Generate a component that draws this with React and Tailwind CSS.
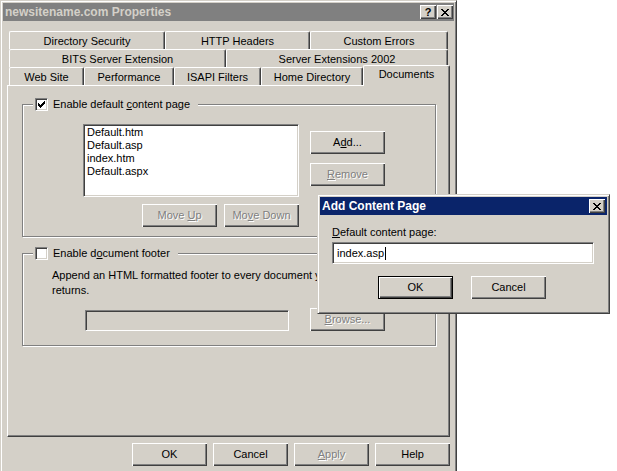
import React from 'react';

const raised =
  'bg-[#d4d0c8] shadow-[inset_1px_1px_#fff,inset_-1px_-1px_#404040,inset_-2px_-2px_#808080]';
const sunken =
  'border border-t-[#808080] border-l-[#808080] border-r-white border-b-white shadow-[inset_1px_1px_#404040,inset_-1px_-1px_#d4d0c8]';

function Button({ children, disabled, primary, className = '' }) {
  return (
    <div
      className={`flex h-[23px] w-[75px] items-center justify-center text-[11px] ${
        primary ? 'border border-black ' + raised : raised
      } ${disabled ? 'text-[#808080] [text-shadow:1px_1px_0_#fff]' : 'text-black'} ${className}`}
    >
      <span className="whitespace-pre">{children}</span>
    </div>
  );
}

const U = ({ children }) => <span className="underline underline-offset-[1px]">{children}</span>;

function Checkbox({ checked }) {
  return (
    <div className={`h-[13px] w-[13px] shrink-0 bg-white ${sunken}`}>
      {checked && (
        <svg width="11" height="11" viewBox="0 0 11 11" shapeRendering="crispEdges">
          <path
            fill="#000"
            d="M8 2h1v1H8z M7 3h2v1H7z M2 4h1v1H2z M6 4h3v1H6z M2 5h2v1H2z M5 5h3v1H5z M2 6h5v1H2z M3 7h3v1H3z M4 8h1v1H4z"
          />
        </svg>
      )}
    </div>
  );
}

function CloseGlyph() {
  return (
    <svg width="8" height="7" viewBox="0 0 8 7" shapeRendering="crispEdges">
      <path
        fill="#000"
        d="M0 0h2v1H0z M6 0h2v1H6z M1 1h2v1H1z M5 1h2v1H5z M2 2h4v1H2z M3 3h2v1H3z M2 4h4v1H2z M1 5h2v1H1z M5 5h2v1H5z M0 6h2v1H0z M6 6h2v1H6z"
      />
    </svg>
  );
}

function CaptionButton({ children }) {
  return <div className={`flex h-[14px] w-[16px] items-center justify-center ${raised}`}>{children}</div>;
}

function Tab({ className = '', children }) {
  return (
    <div
      className={`flex h-[18px] shrink-0 items-center justify-center rounded-t-[2px] border-l border-t border-r border-l-white border-t-white border-r-[#404040] bg-[#d4d0c8] pt-[1px] text-[11px] shadow-[inset_-1px_0_#808080] ${className}`}
    >
      {children}
    </div>
  );
}

function GroupLabel({ checked, children }) {
  return (
    <div className="absolute -top-[7px] left-[10px] flex h-[13px] items-center gap-[5px] bg-[#d4d0c8] pl-[2px] pr-[8px] text-[11px]">
      <Checkbox checked={checked} />
      <span>{children}</span>
    </div>
  );
}

export default function App() {
  return (
    <div className="relative h-[471px] w-[617px] overflow-hidden bg-white font-['Liberation_Sans',Arial,sans-serif] text-black">
      {/* Properties dialog */}
      <div className="h-[490px] w-[457px] border border-t-[#d4d0c8] border-l-[#d4d0c8] border-r-[#404040] border-b-[#404040] bg-[#d4d0c8] p-[2px] shadow-[inset_1px_1px_#fff,inset_-1px_-1px_#808080]">
        <div className="flex h-[18px] items-center justify-between bg-[#808080] pl-[2px] pr-[1px]">
          <span className="text-[12px] font-bold text-[#d4d0c8]">newsitename.com Properties</span>
          <div className="flex gap-[1px]">
            <CaptionButton>
              <span className="text-[11px] font-bold leading-none">?</span>
            </CaptionButton>
            <CaptionButton>
              <CloseGlyph />
            </CaptionButton>
          </div>
        </div>

        <div className="ml-[4px] mt-[10px] w-[443px]">
          <div className="flex h-[18px] px-[2px]">
            <Tab className="w-[156px]">Directory Security</Tab>
            <Tab className="w-[145px]">HTTP Headers</Tab>
            <Tab className="w-[138px]">Custom Errors</Tab>
          </div>
          <div className="flex h-[18px] px-[2px]">
            <Tab className="w-[217px]">BITS Server Extension</Tab>
            <Tab className="w-[222px]">Server Extensions 2002</Tab>
          </div>
          <div className="flex h-[18px] px-[2px]">
            <Tab className="w-[75px]">Web Site</Tab>
            <Tab className="w-[90px]">Performance</Tab>
            <Tab className="w-[87px]">ISAPI Filters</Tab>
            <Tab className="w-[102px]">Home Directory</Tab>
            <div className="relative z-10 -mr-[2px] -mt-[2px] h-[21px] w-[87px] shrink-0 self-start rounded-t-[2px] border-l border-t border-r border-l-white border-t-white border-r-[#404040] bg-[#d4d0c8] shadow-[inset_-1px_0_#808080]">
              <div className="flex h-[17px] items-center justify-center text-[11px]">Documents</div>
            </div>
          </div>

          <div className="h-[352px] w-[443px] border border-t-white border-l-white border-r-[#404040] border-b-[#404040] shadow-[inset_-1px_-1px_#808080]">
            {/* default content page */}
            <div className="relative ml-[14px] mt-[18px] h-[133px] w-[414px] border border-[#808080] shadow-[inset_1px_1px_#fff,1px_1px_#fff]">
              <GroupLabel checked>
                Enable default <U>c</U>ontent page
              </GroupLabel>
              <div className="flex pl-[60px] pt-[19px]">
                <div>
                  <div className={`h-[73px] w-[216px] bg-white pl-[3px] pt-[1px] text-[11px] leading-[13px] ${sunken}`}>
                    <div>Default.htm</div>
                    <div>Default.asp</div>
                    <div>index.htm</div>
                    <div>Default.aspx</div>
                  </div>
                  <div className="mt-[7px] flex justify-end gap-[7px]">
                    <Button disabled>
                      Move <U>U</U>p
                    </Button>
                    <Button disabled>
                      Mo<U>v</U>e Down
                    </Button>
                  </div>
                </div>
                <div className="ml-[11px] mt-[7px] flex flex-col gap-[9px]">
                  <Button>
                    A<U>d</U>d...
                  </Button>
                  <Button disabled>
                    <U>R</U>emove
                  </Button>
                </div>
              </div>
            </div>

            {/* document footer */}
            <div className="relative ml-[14px] mt-[16px] h-[93px] w-[414px] border border-[#808080] shadow-[inset_1px_1px_#fff,1px_1px_#fff]">
              <GroupLabel>
                Enable d<U>o</U>cument footer
              </GroupLabel>
              <div className="ml-[29px] pt-[14px] whitespace-nowrap text-[11px] leading-[15px]">
                Append an HTML formatted footer to every document your Web server
                <br />
                returns.
              </div>
              <div className="ml-[62px] mt-[10px] flex items-end">
                <div className={`h-[21px] w-[204px] bg-[#d4d0c8] ${sunken}`} />
                <Button disabled className="ml-[21px]">
                  <U>B</U>rowse...
                </Button>
              </div>
            </div>
          </div>

          <div className="ml-[125px] mt-[6px] flex gap-[6px]">
            <Button>OK</Button>
            <Button>Cancel</Button>
            <Button disabled>
              <U>A</U>pply
            </Button>
            <Button>Help</Button>
          </div>
        </div>
      </div>

      {/* Add Content Page dialog */}
      <div className="absolute left-[317px] top-[194px] h-[120px] w-[293px] border border-t-[#d4d0c8] border-l-[#d4d0c8] border-r-[#404040] border-b-[#404040] bg-[#d4d0c8] p-[2px] shadow-[inset_1px_1px_#fff,inset_-1px_-1px_#808080]">
        <div className="flex h-[18px] items-center justify-between bg-[#0a246a] pl-[2px] pr-[2px]">
          <span className="text-[12px] font-bold text-white">Add Content Page</span>
          <CaptionButton>
            <CloseGlyph />
          </CaptionButton>
        </div>
        <div className="pl-[12px]">
          <div className="mt-[11px] text-[11px] leading-[13px]">
            <U>D</U>efault content page:
          </div>
          <div className={`mt-[3px] flex h-[22px] w-[262px] items-center bg-white pl-[4px] text-[11px] ${sunken}`}>
            index.asp
            <span className="ml-[1px] inline-block h-[13px] w-[1px] bg-black" />
          </div>
          <div className="ml-[46px] mt-[12px] flex gap-[18px]">
            <Button primary>OK</Button>
            <Button>Cancel</Button>
          </div>
        </div>
      </div>
    </div>
  );
}
